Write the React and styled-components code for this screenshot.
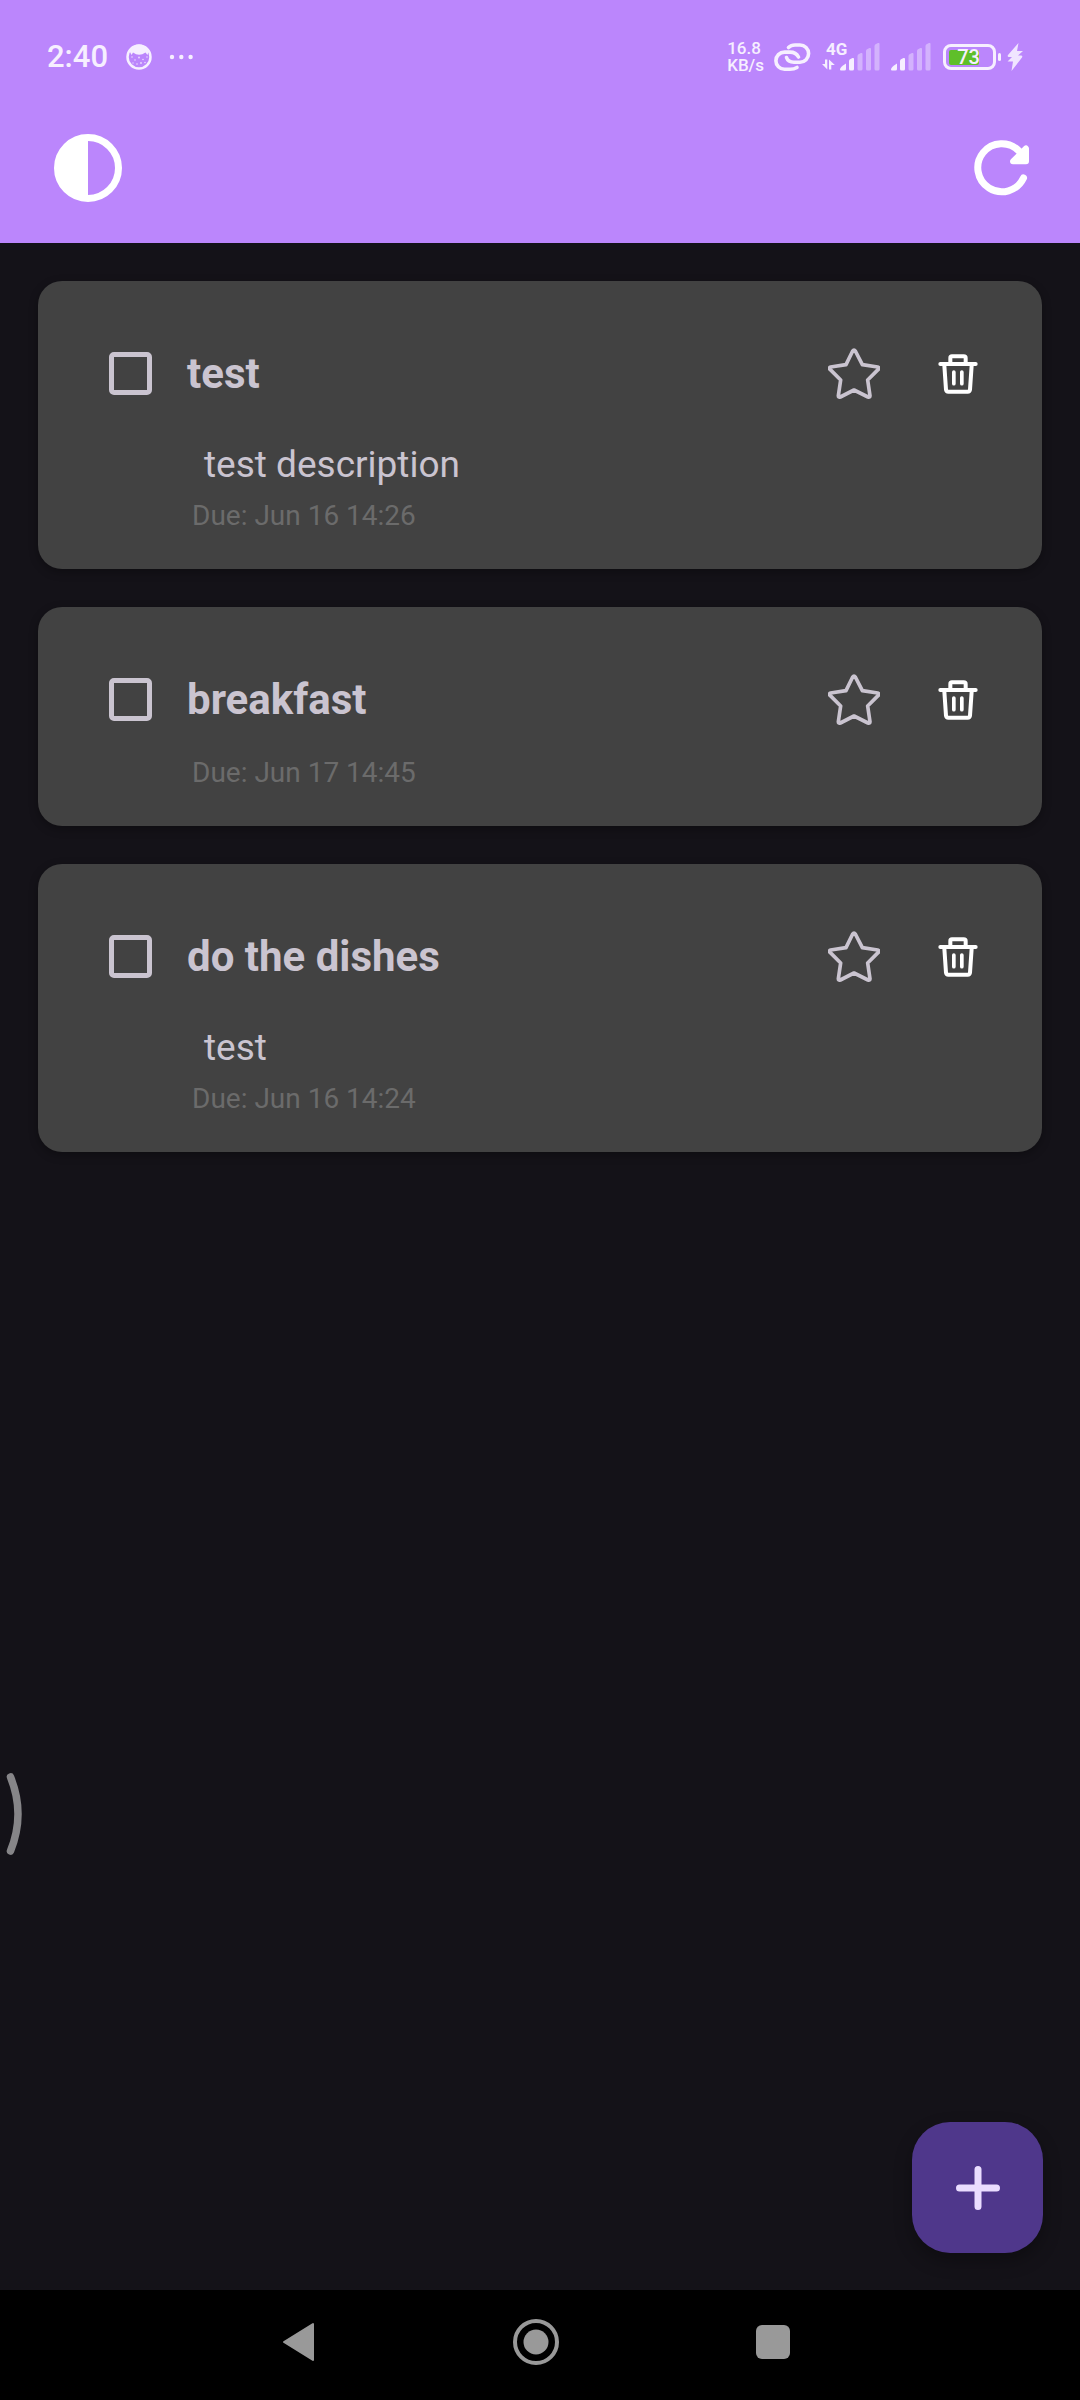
import React, { useState } from "react";
import styled, { createGlobalStyle } from "styled-components";

const GlobalStyle = createGlobalStyle`
  *, *::before, *::after { box-sizing: border-box; }
  body {
    margin: 0;
    background: #141218;
    font-family: Roboto, "Noto Sans", sans-serif;
  }
  button { font: inherit; border: 0; padding: 0; background: none; cursor: pointer; }
  svg { display: block; }
`;

const Screen = styled.div`
  position: relative;
  display: flex;
  flex-direction: column;
  min-height: 100vh;
`;

const Header = styled.header`
  background: #bb86fc;
  color: #fff;
`;

const StatusBar = styled.div`
  display: flex;
  align-items: center;
  justify-content: space-between;
  height: 114px;
  padding: 0 57px 0 47px;
  color: #f6efff;
`;

const StatusGroup = styled.div`
  display: flex;
  align-items: center;
`;

const Clock = styled.time`
  font-size: 31px;
  font-weight: 500;
  line-height: 40px;
  margin-right: 17px;
`;

const NetSpeed = styled.div`
  font-size: 17px;
  font-weight: 500;
  line-height: 17px;
  margin-right: 10px;
`;

const Signal = styled.div`
  display: grid;
  margin-left: 11px;
  & > * { grid-area: 1 / 1; }
`;

const NetworkType = styled.span`
  font-size: 17px;
  font-weight: 700;
  line-height: 12px;
  padding-left: 4px;
`;

const Battery = styled.div`
  display: flex;
  align-items: center;
  gap: 2px;
  margin: 0 6px 0 11px;
  &::after {
    content: "";
    width: 3px;
    height: 8px;
    border-radius: 2px;
    background: #f6efff;
  }
`;

const BatteryBody = styled.div`
  display: grid;
  align-items: center;
  width: 53px;
  height: 26px;
  padding: 0 3px;
  border: 3px solid #f6efff;
  border-radius: 8px;
  & > * { grid-area: 1 / 1; }
`;

const BatteryLevel = styled.span`
  height: 15px;
  border-radius: 2px;
  background: #5fbf2a;
`;

const BatteryText = styled.span`
  font-size: 20px;
  font-weight: 500;
  line-height: 20px;
  text-align: center;
  padding-right: 2px;
`;

const Toolbar = styled.div`
  display: flex;
  align-items: center;
  justify-content: space-between;
  height: 129px;
  padding: 0 38px 21px 48px;
`;

const ToolButton = styled.button`
  display: grid;
  place-items: center;
  width: 80px;
  height: 80px;
  color: #fff;
`;

const TaskList = styled.ul`
  flex: 1;
  display: flex;
  flex-direction: column;
  gap: 38px;
  margin: 0;
  padding: 38px;
  list-style: none;
`;

const Card = styled.li`
  padding: 36px;
  border-radius: 24px;
  background: #424242;
  box-shadow: 0 3px 10px rgba(0, 0, 0, 0.3);
`;

const TaskRow = styled.div`
  display: flex;
  align-items: center;
  height: 113px;
`;

const CheckArea = styled.span`
  display: grid;
  place-items: center;
  width: 113px;
`;

const Check = styled.input`
  appearance: none;
  width: 43px;
  height: 43px;
  margin: 0;
  border: 5px solid #cac4d0;
  border-radius: 5px;
  &:checked { background: #cac4d0; }
`;

const Title = styled.label`
  flex: 1;
  color: #cac4d0;
  font-size: 42px;
  font-weight: 700;
  line-height: 57px;
`;

const Actions = styled.div`
  display: flex;
  gap: 8px;
`;

const ActionButton = styled.button`
  display: grid;
  place-items: center;
  width: 96px;
  height: 96px;
  color: ${(p) => p.$color};
`;

const Description = styled.p`
  margin: 0;
  padding: 6px 0 6px 130px;
  color: #cac4d0;
  font-size: 37px;
  line-height: 57px;
`;

const Due = styled.p`
  margin: 0;
  padding-left: 118px;
  color: #6b6b6b;
  font-size: 28px;
  line-height: 34px;
`;

const Fab = styled.button`
  position: absolute;
  right: 37px;
  bottom: 147px;
  display: grid;
  place-items: center;
  width: 131px;
  height: 131px;
  border-radius: 38px;
  background: #4f378b;
  color: #eaddff;
  box-shadow: 0 8px 18px rgba(0, 0, 0, 0.3);
`;

const EdgeHandle = styled.div`
  position: absolute;
  left: 6px;
  bottom: 544px;
`;

const NavBar = styled.nav`
  display: flex;
  align-items: center;
  justify-content: center;
  gap: 157px;
  height: 110px;
  padding: 0 8px 6px 0;
  background: #000;
`;

const NavButton = styled.button`
  display: grid;
  place-items: center;
  width: 80px;
  height: 80px;
  color: #999;
`;

const TASKS = [
  { id: "t1", title: "test", description: "test description", due: "Jun 16 14:26" },
  { id: "t2", title: "breakfast", due: "Jun 17 14:45" },
  { id: "t3", title: "do the dishes", description: "test", due: "Jun 16 14:24" },
];

const BATTERY_PERCENT = 73;

function SignalBars() {
  return (
    <>
      <path d="M0 26.500Q0 24 6 20.500V26Q6 27.500 4.500 27.500H1Q0 27.500 0 26.500Z" />
      <path d="M9 18q0-1.500 1.500-2l2-1q1.500-.5 1.500 1V26q0 1.500-1.500 1.500h-2q-1.500 0-1.500-1.500Z" />
      <g opacity="0.42">
        <path d="M17.500 13q0-1.500 1.500-2l2-1q1.500-.5 1.500 1V26q0 1.500-1.500 1.500h-2q-1.500 0-1.500-1.500Z" />
        <path d="M26 8q0-1.500 1.500-2l2-1q1.500-.5 1.500 1V26q0 1.500-1.500 1.500h-2q-1.500 0-1.500-1.500Z" />
        <path d="M34.500 3q0-1.500 1.500-2l2-1q1.500-.5 1.500 1V26q0 1.500-1.500 1.500h-2q-1.500 0-1.500-1.500Z" />
      </g>
    </>
  );
}

function Star({ filled }) {
  return (
    <svg width="52" height="52" viewBox="145 262 156 156" aria-hidden="true">
      <path
        d="M219 271Q223 265 227 271L248 312L294 319Q301 321 295 327L264 358L271 405Q271 411 265 409L223 388L182 409Q176 411 176 405L183 358L152 327Q146 321 153 319L199 312Z"
        fill={filled ? "currentColor" : "none"}
        stroke="currentColor"
        strokeWidth="11"
        strokeLinejoin="round"
      />
    </svg>
  );
}

function Trash() {
  return (
    <svg width="40" height="40" viewBox="476 284 120 120" fill="none" stroke="currentColor" strokeWidth="12" strokeLinecap="round" strokeLinejoin="round" aria-hidden="true">
      <path d="M483 314H589" />
      <path d="M513 312V296Q513 291 518 291H553Q559 291 559 296V312" />
      <path d="M495 318L500 391Q501 397 507 397H565Q571 397 572 391L577 318" />
      <path d="M523.500 338V373M547.500 338V373" strokeWidth="11" />
    </svg>
  );
}

function Task({ task }) {
  const [done, setDone] = useState(false);
  const [starred, setStarred] = useState(false);
  return (
    <Card>
      <TaskRow>
        <CheckArea>
          <Check type="checkbox" id={task.id} checked={done} onChange={() => setDone(!done)} />
        </CheckArea>
        <Title htmlFor={task.id}>{task.title}</Title>
        <Actions>
          <ActionButton $color="#cac4d0" aria-label="Star" onClick={() => setStarred(!starred)}>
            <Star filled={starred} />
          </ActionButton>
          <ActionButton $color="#fff" aria-label="Delete">
            <Trash />
          </ActionButton>
        </Actions>
      </TaskRow>
      {task.description && <Description>{task.description}</Description>}
      <Due>Due: {task.due}</Due>
    </Card>
  );
}

export default function App() {
  return (
    <Screen>
      <GlobalStyle />
      <Header>
        <StatusBar>
          <StatusGroup>
            <Clock>2:40</Clock>
            <svg width="70" height="28" viewBox="0 0 70 28" fill="currentColor" aria-hidden="true">
              <circle cx="14" cy="14" r="11.500" fill="none" stroke="currentColor" strokeWidth="2.500" />
              <path d="M4 7Q14-4 24 7L22.500 12L20.500 9.500Q14 14 8 9.500L6.500 12Z" />
              <g opacity="0.8">
                <circle cx="7" cy="14" r=".8" />
                <circle cx="10" cy="17" r=".8" />
                <circle cx="14" cy="14.500" r=".9" />
                <circle cx="18" cy="16.500" r=".8" />
                <circle cx="22" cy="14" r=".8" />
                <circle cx="12" cy="21" r=".8" />
                <circle cx="16" cy="20" r=".9" />
                <circle cx="20" cy="19.500" r=".8" />
                <circle cx="8" cy="20" r=".7" />
              </g>
              <circle cx="47" cy="14" r="2.200" />
              <circle cx="56.300" cy="14" r="2.200" />
              <circle cx="65.600" cy="14" r="2.200" />
            </svg>
          </StatusGroup>
          <StatusGroup>
            <NetSpeed>
              16.8
              <br />
              KB/s
            </NetSpeed>
            <svg width="37" height="30" viewBox="774 42 37 30" fill="none" stroke="currentColor" strokeWidth="3.600" strokeLinecap="round" aria-hidden="true">
              <path d="M788.500 47.500Q791 45 795 45H800A8.600 8.600 0 0 1 800 62.200H794Q788 62.200 786.500 57.500" />
              <path d="M797 67.500Q794 69.300 790 69.300H784.500A8.600 8.600 0 0 1 784.500 52.100H790Q796 52.100 798.500 57" />
            </svg>
            <Signal>
              <NetworkType>4G</NetworkType>
              <svg width="58" height="28" viewBox="0 0 58 28" fill="currentColor" aria-hidden="true">
                <path d="M5.300 16.500V26.500L0 21H3V16.500ZM7 26.500V16.500L12.800 22H9.300V26.500Z" />
                <g transform="translate(18 0)">
                  <SignalBars />
                </g>
              </svg>
            </Signal>
            <Signal>
              <svg width="41" height="28" viewBox="0 0 41 28" fill="currentColor" aria-hidden="true">
                <SignalBars />
              </svg>
            </Signal>
            <Battery>
              <BatteryBody>
                <BatteryLevel style={{ width: `${BATTERY_PERCENT}%` }} />
                <BatteryText>{BATTERY_PERCENT}</BatteryText>
              </BatteryBody>
            </Battery>
            <svg width="16" height="28" viewBox="0 0 16 28" fill="currentColor" aria-hidden="true">
              <path d="M11.500 0L1 12Q0 14 2 14H5L.5 18.500H6L4.500 28L15 14.500Q16 12.500 14 12.500H11L16 8H10Z" opacity="0.9" />
            </svg>
          </StatusGroup>
        </StatusBar>
        <Toolbar>
          <ToolButton aria-label="Toggle theme">
            <svg width="68" height="68" viewBox="0 0 68 68" aria-hidden="true">
              <circle cx="34" cy="34" r="30.500" fill="none" stroke="currentColor" strokeWidth="7" />
              <path d="M34 2A32 32 0 0 0 34 66Z" fill="currentColor" />
            </svg>
          </ToolButton>
          <ToolButton aria-label="Refresh">
            <svg width="68" height="68" viewBox="968 134 68 68" fill="none" stroke="currentColor" strokeLinecap="round" strokeLinejoin="round" aria-hidden="true">
              <path d="M1023.500 178A24 24 0 1 1 1019 151" strokeWidth="7" />
              <path d="M1026 148.500V161.300H1013Z" fill="currentColor" strokeWidth="6" />
            </svg>
          </ToolButton>
        </Toolbar>
      </Header>

      <TaskList>
        {TASKS.map((task) => (
          <Task key={task.id} task={task} />
        ))}
      </TaskList>

      <Fab aria-label="Add task">
        <svg width="44" height="44" viewBox="0 0 44 44" aria-hidden="true">
          <path d="M22 3.500V40.500M3.500 22H40.500" stroke="currentColor" strokeWidth="7" strokeLinecap="round" />
        </svg>
      </Fab>

      <EdgeHandle>
        <svg width="17" height="84" viewBox="0 0 17 84" aria-hidden="true">
          <path d="M4.500 5Q19.500 42 4.500 79" fill="none" stroke="#868588" strokeWidth="7.500" strokeLinecap="round" />
        </svg>
      </EdgeHandle>

      <NavBar>
        <NavButton aria-label="Back">
          <svg width="34" height="40" viewBox="0 0 34 40" aria-hidden="true">
            <path d="M2 20L31 2V38Z" fill="currentColor" stroke="currentColor" strokeWidth="2" strokeLinejoin="round" />
          </svg>
        </NavButton>
        <NavButton aria-label="Home">
          <svg width="46" height="46" viewBox="0 0 46 46" aria-hidden="true">
            <circle cx="23" cy="23" r="21" fill="none" stroke="currentColor" strokeWidth="4" />
            <circle cx="23" cy="23" r="12.500" fill="currentColor" />
          </svg>
        </NavButton>
        <NavButton aria-label="Recent apps">
          <svg width="34" height="34" viewBox="0 0 34 34" aria-hidden="true">
            <rect width="34" height="34" rx="6" fill="currentColor" />
          </svg>
        </NavButton>
      </NavBar>
    </Screen>
  );
}
